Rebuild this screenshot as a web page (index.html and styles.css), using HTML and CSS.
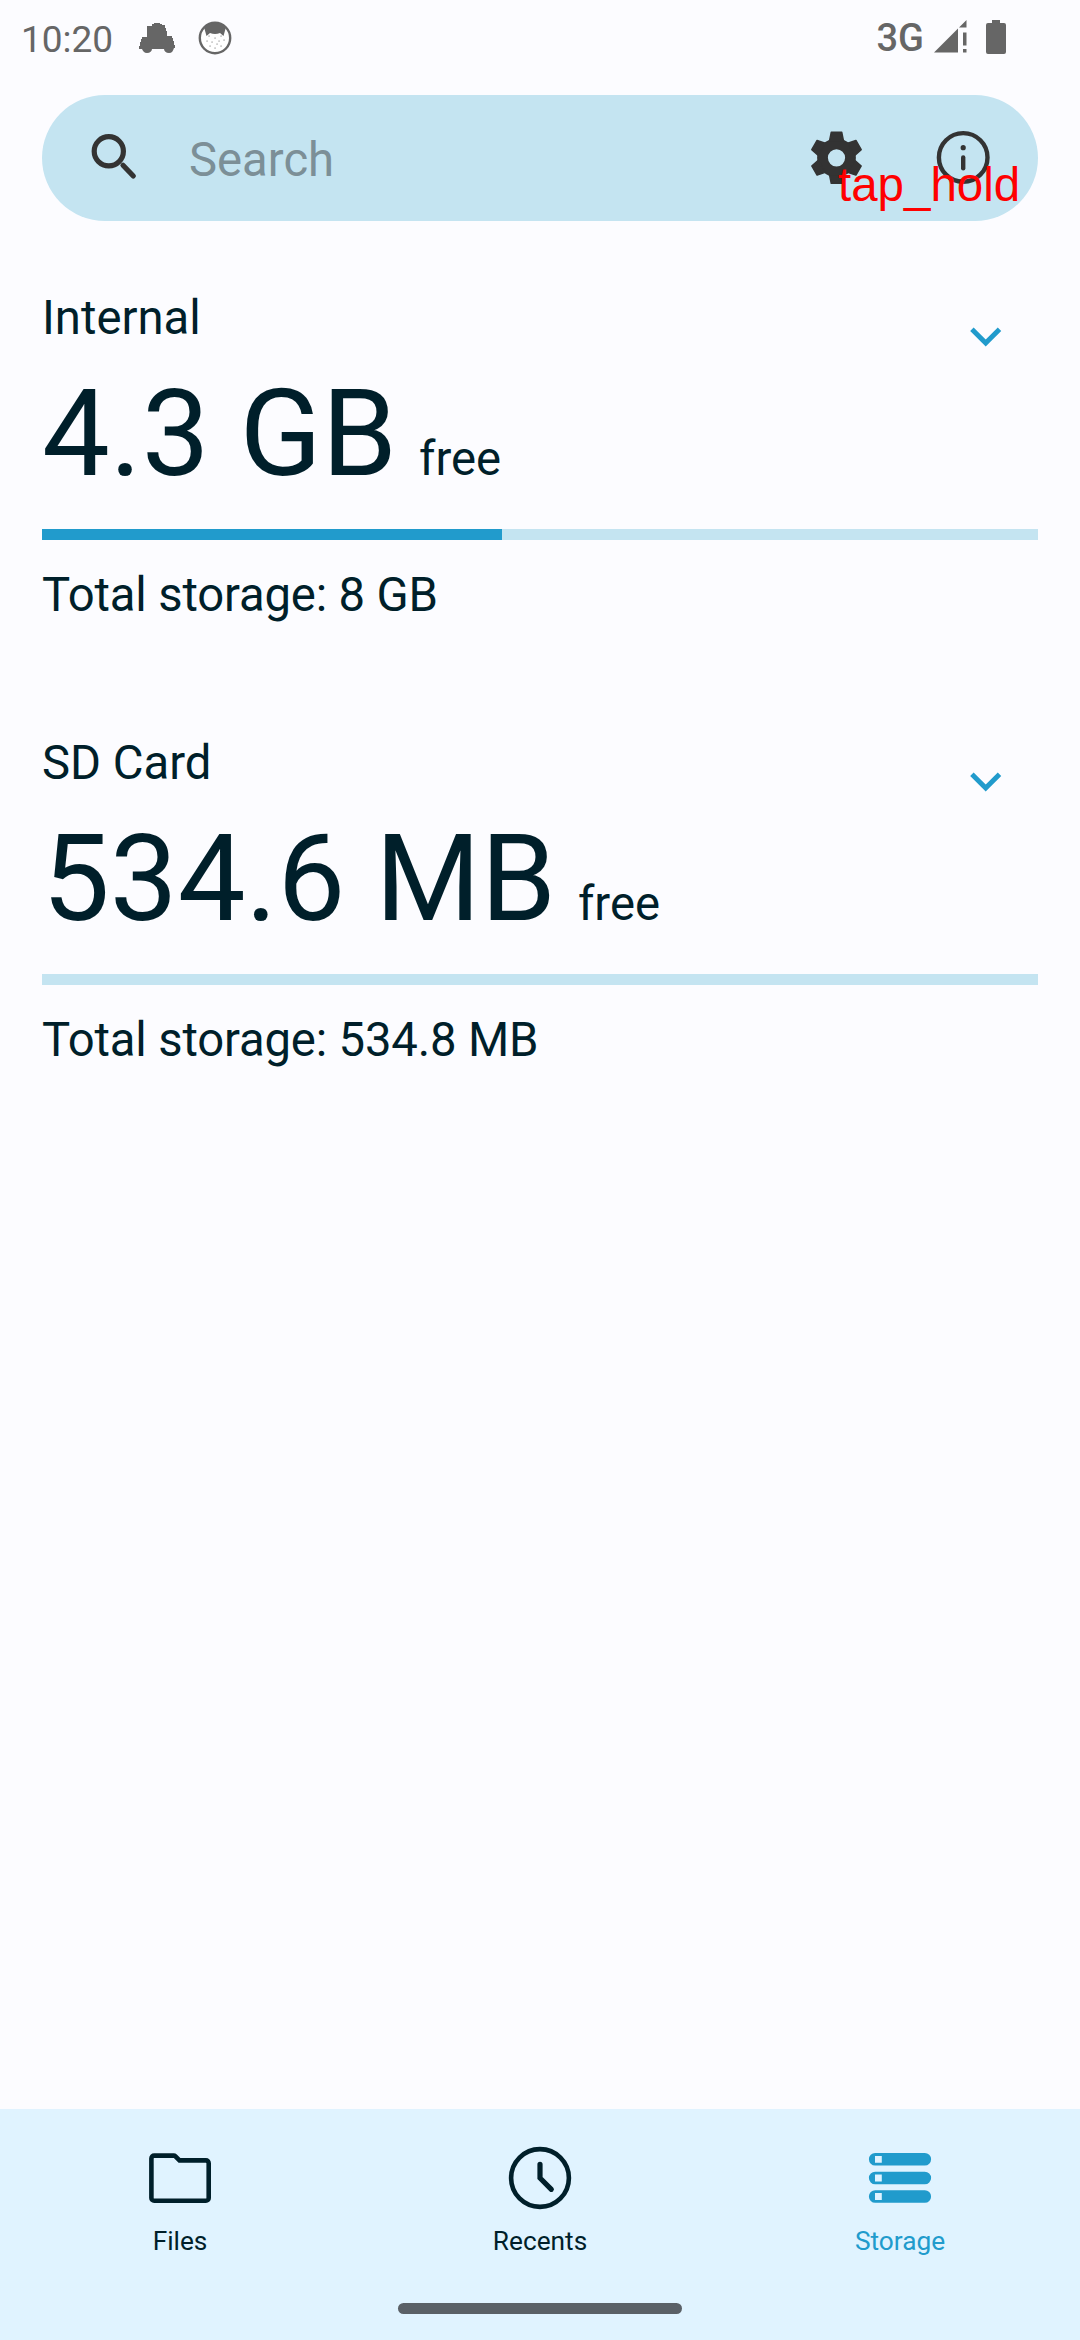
FILE: index.html
```html
<!DOCTYPE html>
<html lang="en">
<head>
<meta charset="utf-8">
<title>Storage</title>
<link rel="stylesheet" href="styles.css">
</head>
<body>
<div class="screen">
  <header class="status">
    <span class="time">10:20</span>
    <svg class="car" width="38" height="31" viewBox="0 0 38 31"><path d="M14 2h2V1h6v1h2v1h3v3h1v3h1v5h5v2h1v3h1v4h1v3h-1c-1 3-2 5-5 5s-5-2-5-4H14c0 2-2 4-5 4s-4-2-5-4H1v-3h1v-4h1v-3h1v-2h5V4h5z"/></svg>
    <svg class="face" width="34" height="34" viewBox="0 0 34 34"><circle cx="17" cy="17" r="15.2" fill="#fff" stroke="#666" stroke-width="2.4"/><path fill="#666" d="M6 6Q17-2 28 6L25.500 15l-3.500-3q-5 2-10 0l-3.500 3z"/><path fill="none" stroke="#666" stroke-width="1.2" stroke-linecap="round" d="M11 15h.1M23 15h.1M17 17h.1M9 20h.1M14 21h.1M21 20h.1M26 19h.1M12 25h.1M19 23h.1M23 25h.1M17 27h.1"/></svg>
    <span class="network">3G</span>
    <svg class="signal" width="33" height="33" viewBox="0 0 33 33"><path d="M0 32.500 24 8.500V32.500zM25 7.500 32.500 0V7.500zM29 12.500h3.500V25.500H29zM29 29h3.500v3.500H29z"/></svg>
    <svg class="battery" width="20" height="34" viewBox="0 0 20 34"><path d="M6 0h8v3h4a2 2 0 0 1 2 2v27a2 2 0 0 1-2 2H2a2 2 0 0 1-2-2V5a2 2 0 0 1 2-2h4z"/></svg>
  </header>

  <div class="search">
    <svg class="magnifier" width="48" height="48" viewBox="0 0 48 48"><circle cx="18.800" cy="17.300" r="14.600"/><path d="M33 31.300 43.300 42"/></svg>
    <span class="hint">Search</span>
    <svg class="gear" width="63" height="63" viewBox="-31.500 -30.800 63 63">
      <defs><path id="tooth" d="M-7-17-5.300-25.500H5.300L7-17z"/></defs>
      <circle class="ring" r="14"/>
      <use href="#tooth"/><use href="#tooth" transform="rotate(60)"/><use href="#tooth" transform="rotate(120)"/><use href="#tooth" transform="rotate(180)"/><use href="#tooth" transform="rotate(240)"/><use href="#tooth" transform="rotate(300)"/>
    </svg>
    <svg class="info" width="54" height="54" viewBox="0 0 54 54"><circle cx="27.200" cy="26.400" r="24.300"/><path d="M27.200 26.400V37.300"/><circle class="dot" cx="27.200" cy="16.700" r="2.600"/></svg>
    <span class="gesture-label">tap_hold</span>
  </div>

  <main class="volumes">
    <section class="volume">
      <div class="head">
        <div>
          <div class="name">Internal</div>
          <div class="free"><span class="amount">4.3 GB</span><span class="unit">free</span></div>
        </div>
        <svg class="chevron" width="32" height="20" viewBox="0 0 32 20"><path d="M1.900 1.300 15.700 15.100 29.500 1.300"/></svg>
      </div>
      <div class="bar"><div class="fill" style="width:46.2%"></div></div>
      <div class="total">Total storage: 8 GB</div>
    </section>
    <section class="volume">
      <div class="head">
        <div>
          <div class="name">SD Card</div>
          <div class="free"><span class="amount">534.6 MB</span><span class="unit">free</span></div>
        </div>
        <svg class="chevron" width="32" height="20" viewBox="0 0 32 20"><path d="M1.900 1.300 15.700 15.100 29.500 1.300"/></svg>
      </div>
      <div class="bar"><div class="fill" style="width:0%"></div></div>
      <div class="total">Total storage: 534.8 MB</div>
    </section>
  </main>

  <footer class="bottom">
    <nav class="tabs">
      <div class="tab">
        <svg width="64" height="64" viewBox="0 0 64 64"><path class="line" d="M6.200 9.600h19.600a2 2 0 0 1 1.400.6l4.300 4.200h26.400a2.800 2.800 0 0 1 2.800 2.800v34.700a2.800 2.800 0 0 1-2.800 2.800H6.200a2.800 2.800 0 0 1-2.800-2.800V12.400a2.800 2.800 0 0 1 2.800-2.800z"/></svg>
        <span>Files</span>
      </div>
      <div class="tab">
        <svg width="64" height="64" viewBox="0 0 64 64"><circle class="line" cx="32" cy="32" r="28.900"/><path class="line round" d="M32 18.300v13.700l11.300 11.300"/></svg>
        <span>Recents</span>
      </div>
      <div class="tab active">
        <svg width="64" height="64" viewBox="0 0 64 64"><path fill-rule="evenodd" d="M7.200 7h49.600a6.300 6.300 0 0 1 0 12.600H7.200a6.300 6.300 0 0 1 0-12.600zM7 10v6.800h6.800V10zM7.200 25.700h49.600a6.300 6.300 0 0 1 0 12.600H7.200a6.300 6.300 0 0 1 0-12.600zM7 28.600v6.800h6.800v-6.800zM7.200 44.200h49.600a6.300 6.300 0 0 1 0 12.600H7.200a6.300 6.300 0 0 1 0-12.600zM7 47.100v6.800h6.800v-6.800z"/></svg>
        <span>Storage</span>
      </div>
    </nav>
    <div class="home-handle"></div>
  </footer>
</div>
</body>
</html>
```
FILE: styles.css
```css
* { box-sizing: border-box; }
body { margin: 0; font-family: Roboto, "Noto Sans", sans-serif; color: #001f2a; background: #fcfcff; }
svg { display: block; flex: none; overflow: visible; }
.screen { width: 1080px; height: 2340px; display: flex; flex-direction: column; overflow: hidden; }

.status { height: 95px; display: flex; align-items: flex-start; padding: 0 74px 0 21px; color: #666; fill: #666; }
.time { font-size: 37px; line-height: 44px; margin-top: 18px; width: 117px; }
.car { margin-top: 22px; }
.face { margin: 21px 0 0 22px; }
.network { margin: 15px 10px 0 auto; font-size: 38px; line-height: 46px; font-weight: 500; }
.signal { margin-top: 20px; }
.battery { margin: 20px 0 0 19px; }

.search { position: relative; height: 126px; margin: 0 42px; padding: 0 48px; border-radius: 63px; background: #c4e4f1; display: flex; align-items: center; fill: #333; }
.magnifier { fill: none; stroke: #333; stroke-width: 5.2; stroke-linecap: round; }
.hint { font-size: 47.250px; line-height: 56px; color: #7c8f97; margin-left: 51px; padding-top: 3px; }
.gear { margin-left: auto; stroke: #333; stroke-width: 1.4; stroke-linejoin: round; }
.ring { fill: none; stroke-width: 10.800; }
.info { margin-left: 68px; fill: none; stroke: #333; stroke-width: 4.400; stroke-linecap: round; }
.info .dot { fill: #333; stroke: none; }
.gesture-label { position: absolute; left: 796px; top: 63px; font: 47.500px/54px "Liberation Sans", Arial, sans-serif; color: #f00; }

.volumes { flex: 1; padding: 69px 42px 0; }
.volume { height: 445px; }
.head { display: flex; justify-content: space-between; height: 239px; }
.chevron { fill: none; stroke: #219bcc; stroke-width: 4.900; margin: 38px 36px 0 0; }
.name { font-size: 47.250px; line-height: 56px; }
.free { display: flex; align-items: baseline; line-height: 142px; margin-top: 17px; }
.amount { font-size: 120.750px; }
.unit { font-size: 47.250px; margin-left: 22px; }
.bar { height: 11px; background: #c4e4f1; }
.fill { height: 100%; background: #219bcc; }
.total { font-size: 47.250px; line-height: 56px; letter-spacing: -.17px; margin-top: 27px; }

.bottom { height: 231px; background: #e0f3ff; display: flex; flex-direction: column; align-items: center; }
.tabs { width: 1080px; height: 194px; display: grid; grid-template-columns: repeat(3, 1fr); }
.tab { display: flex; flex-direction: column; align-items: center; padding-top: 37px; gap: 16px; font-size: 26.250px; line-height: 31px; fill: currentColor; }
.line { fill: none; stroke: currentColor; stroke-width: 4.600; }
.round { stroke-linecap: round; stroke-width: 5.200; }
.active { color: #219bcc; }
.home-handle { width: 284px; height: 11px; border-radius: 5.500px; background: #5a6067; }
```
